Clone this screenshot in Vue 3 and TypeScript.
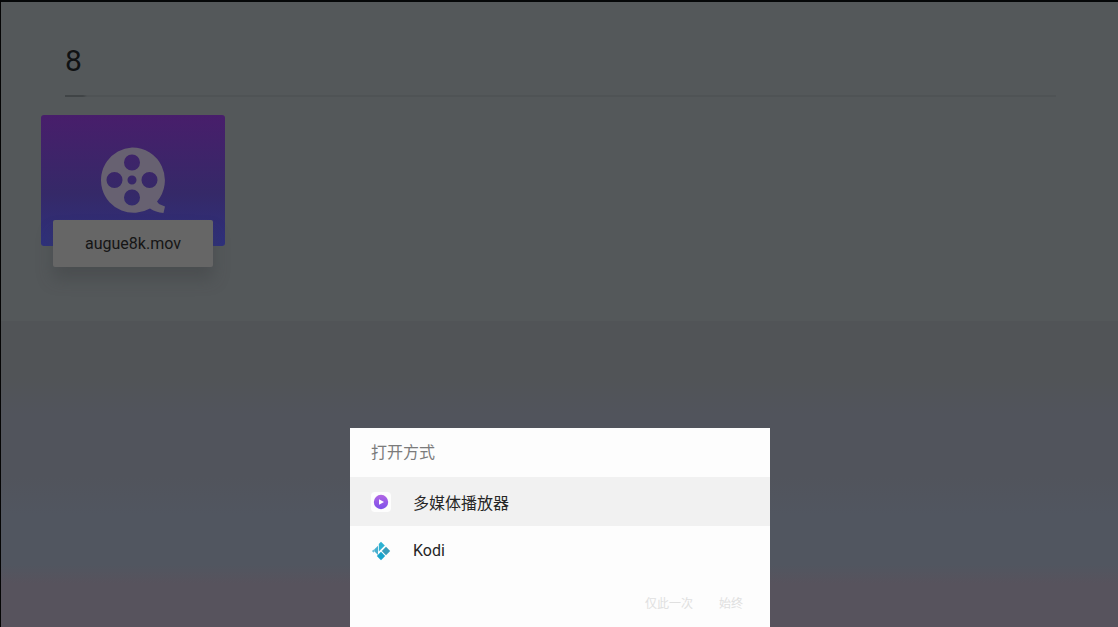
<script setup lang="ts">
import { ref } from 'vue'

const folder = '8'
const fileName = 'augue8k.mov'
const apps = [
  { id: 'player', name: '多媒体播放器' },
  { id: 'kodi', name: 'Kodi' },
]
const selected = ref('player')
</script>

<template>
  <div class="screen">
    <main class="browser">
      <header class="heading">
        <h1>{{ folder }}</h1>
      </header>
      <button class="file" type="button">
        <span class="cover">
          <svg viewBox="0 0 68 66" width="68" height="66" aria-hidden="true">
            <path
              fill="#676171"
              fill-rule="evenodd"
              d="M33 0.500a32.700 32.700 0 0 1 25 54l2 2.500 6 2.500-1.500 6.500c-5-.5-10-2-13.500-4.500A32.700 32.700 0 1 1 33 0.500ZM33 7.500a8 8 0 1 0 0 16a8 8 0 1 0 0-16ZM15.500 25a8 8 0 1 0 0 16a8 8 0 1 0 0-16ZM50.500 25a8 8 0 1 0 0 16a8 8 0 1 0 0-16ZM33 42.500a8 8 0 1 0 0 16a8 8 0 1 0 0-16ZM33 28.500a4.500 4.500 0 1 0 0 9a4.500 4.500 0 1 0 0-9Z"
            />
          </svg>
        </span>
        <span class="caption">{{ fileName }}</span>
      </button>
    </main>

    <div class="overlay">
      <section class="dialog" role="dialog" aria-labelledby="dialog-title">
        <h2 id="dialog-title">打开方式</h2>
        <button
          v-for="app in apps"
          :key="app.id"
          type="button"
          class="app"
          :class="{ selected: selected === app.id }"
          @click="selected = app.id"
        >
          <svg v-if="app.id === 'player'" viewBox="0 0 20 20" width="20" height="20" aria-hidden="true">
            <defs>
              <linearGradient id="violet" x1="0" y1="0" x2="0" y2="1">
                <stop offset="0" stop-color="#b266e4" />
                <stop offset="1" stop-color="#7c50ea" />
              </linearGradient>
            </defs>
            <rect width="20" height="20" rx="4" fill="#fdfdfd" />
            <circle cx="10" cy="10" r="7.200" fill="url(#violet)" />
            <path d="M8 7.200l5 2.800L8 12.800Z" fill="#fff" />
          </svg>
          <svg v-else viewBox="0 0 20 20" width="20" height="20" aria-hidden="true">
            <path d="M10 0.800l3.800 3.800L7.800 10.600V3Z" fill="#2db2d2" />
            <path d="M7 4.800v9.200L3.200 10.200V8.600Z" fill="#49afd0" />
            <path d="M2.800 8.400v3.400L1 10Z" fill="#49afd0" />
            <path d="M15 5.800L19.200 10 15 14.200 10.800 10Z" fill="#389cba" />
            <path d="M10 10.800l4.200 4.200L10 19.200 5.800 15Z" fill="#18a4cc" />
          </svg>
          <span>{{ app.name }}</span>
        </button>
        <footer>
          <button type="button" disabled>仅此一次</button>
          <button type="button" disabled>始终</button>
        </footer>
      </section>
    </div>
  </div>
</template>

<style>
body {
  margin: 0;
  background: #000;
}
</style>

<style scoped>
* {
  box-sizing: border-box;
}

.screen {
  min-height: 100vh;
  border-top: 2px solid #050708;
  border-left: 1px solid #050505;
  background: linear-gradient(
    #54585a 0 51%,
    #515457 51% 60%,
    #51545c 66% 76%,
    #515660 82% 90%,
    #57535d 93%
  );
  font-family: Roboto, "Noto Sans CJK SC", sans-serif;
}

.browser {
  padding: 37px 62px 0 40px;
}

.heading {
  margin-left: 24px;
}

.heading::after {
  display: block;
  height: 2px;
  margin-top: 12px;
  background: linear-gradient(90deg, #404446 18px, #4f5355 22px);
  content: "";
}

h1 {
  margin: 0;
  color: #101213;
  font-size: 30px;
  font-weight: 400;
  line-height: 44px;
}

button {
  border: 0;
  padding: 0;
  background: none;
  font-family: inherit;
}

.file {
  display: grid;
  justify-items: center;
  width: 184px;
  margin-top: 18px;
}

.cover {
  display: flex;
  justify-content: center;
  width: 100%;
  height: 131px;
  padding-top: 32px;
  border-radius: 3px;
  background: linear-gradient(#481e6b, #352968 60%, #2e307d);
}

.caption {
  width: 160px;
  margin-top: -26px;
  border-radius: 2px;
  background: #666;
  box-shadow: 0 12px 16px rgba(60, 63, 65, 0.4);
  color: #151515;
  font-size: 16px;
  line-height: 47px;
}

.overlay {
  position: fixed;
  right: 0;
  bottom: 0;
  left: 2px;
  display: flex;
  justify-content: center;
}

.dialog {
  width: 420px;
  max-width: 100%;
  background: #fdfdfd;
}

h2 {
  margin: 0;
  padding: 0 21px;
  color: #7b7b7b;
  font-size: 16px;
  font-weight: 400;
  line-height: 49px;
}

.app {
  display: flex;
  align-items: center;
  gap: 22px;
  width: 100%;
  height: 49px;
  padding: 0 21px;
  color: #262626;
  font-size: 16px;
  text-align: left;
}

.app.selected {
  background: #f1f1f1;
}

footer {
  display: flex;
  justify-content: flex-end;
  gap: 26px;
  padding: 17px 27px 11px;
}

footer button {
  color: #e0e0e0;
  font-size: 12px;
  line-height: 24px;
}
</style>
